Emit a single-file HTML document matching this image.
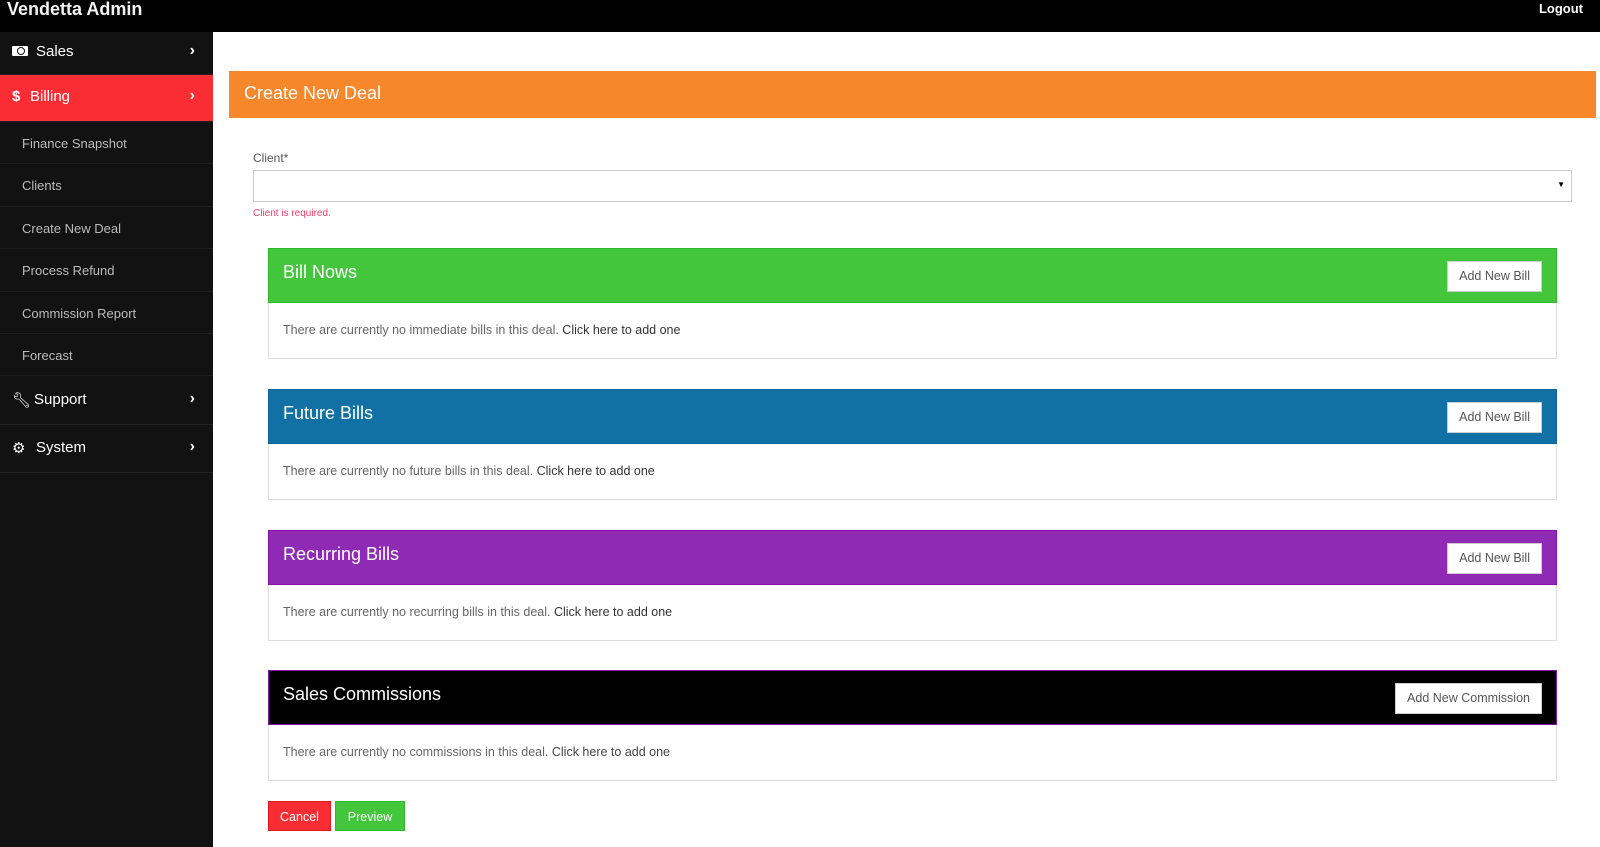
<!DOCTYPE html>
<html><head><style>
*{box-sizing:border-box;margin:0;padding:0}
body{width:1600px;height:847px;overflow:hidden;background:#fff;font-family:"Liberation Sans",sans-serif;position:relative}
.top{position:absolute;left:0;top:0;width:1600px;height:32px;background:#000;color:#fff}
.brand{position:absolute;left:7px;top:-1px;font-size:18px;font-weight:bold;color:#f2f2f2}
.logout{position:absolute;right:17px;top:1px;font-size:13px;font-weight:bold}
.side{position:absolute;left:0;top:32px;width:213px;height:815px;background:#121212}
.nav{position:absolute;left:0;width:213px;color:#fff;font-size:15px;border-bottom:1px solid #222}
.nav span{position:absolute;left:36px}
.nav .ic{position:absolute;left:12px}
.nav .ch{position:absolute;right:18px;left:auto;font-size:16px;font-weight:bold}
.bill{position:absolute;left:12px;top:14px;width:16px;height:10px;background:#fff;border-radius:1px}
.bill:after{content:"";position:absolute;left:5px;top:1px;width:6px;height:6px;border-radius:50%;border:1px solid #121212}
.sub{position:absolute;left:0;width:213px;height:42px;color:#bbb;font-size:13px;padding-left:22px;border-bottom:1px solid #1e1e1e}
.orange{position:absolute;left:229px;top:71px;width:1367px;height:47px;background:#f7872b;color:#fff;font-size:18px;padding:12px 0 0 15px}
.lbl{position:absolute;left:253px;top:151px;font-size:12px;color:#555}
.sel{position:absolute;left:253px;top:170px;width:1319px;height:32px;border:1px solid #ccc}
.sel:after{content:"▼";position:absolute;right:6px;top:9px;font-size:8px;color:#000}
.err{position:absolute;left:253px;top:208px;font-size:10px;color:#f0406a}
.panel{position:absolute;left:268px;width:1289px;height:111px;border:1px solid #ddd}
.ph{height:55px;color:#fff;font-size:18px;padding:13px 0 0 14px;position:relative;margin:-1px -1px 0 -1px}
.pb{padding:20px 0 0 14px;font-size:12.5px;color:#666}
.btn{position:absolute;right:14px;top:12px;height:31px;background:#fff;border:1px solid #ccc;color:#555;font-size:12.5px;padding:7px 11px 0}
.bb{position:absolute;top:801px;height:30px;color:#fff;font-size:12.5px;padding:8px 0 0;text-align:center}
</style></head><body>
<div class="top"><div class="brand">Vendetta Admin</div><div class="logout">Logout</div></div>
<div class="side">
<div class="nav" style="top:0;height:43px"><div class="bill"></div><span style="top:11px">Sales</span><span class="ch" style="top:10px">›</span></div>
<div class="nav" style="top:43px;height:47px;background:#fb2d34"><span class="ic" style="top:13px;font-weight:bold">$</span><span style="top:13px;left:30px">Billing</span><span class="ch" style="top:12px">›</span></div>
<div class="sub" style="top:90px;padding-top:14px">Finance Snapshot</div>
<div class="sub" style="top:133px;padding-top:13px">Clients</div>
<div class="sub" style="top:175px;padding-top:14px">Create New Deal</div>
<div class="sub" style="top:218px;padding-top:13px">Process Refund</div>
<div class="sub" style="top:260px;padding-top:14px">Commission Report</div>
<div class="sub" style="top:302px;padding-top:14px">Forecast</div>
<div class="nav" style="top:345px;height:48px"><span class="ic" style="top:14px">🔧&#xFE0E;</span><span style="top:14px;left:34px">Support</span><span class="ch" style="top:13px">›</span></div>
<div class="nav" style="top:393px;height:48px"><span class="ic" style="top:14px">⚙</span><span style="top:14px">System</span><span class="ch" style="top:13px">›</span></div>
</div>
<div class="orange">Create New Deal</div>
<div class="lbl">Client*</div>
<div class="sel"></div>
<div class="err">Client is required.</div>
<div class="panel" style="top:248px"><div class="ph" style="background:#43c63c;border:1px solid #2fb82a">Bill Nows<div class="btn">Add New Bill</div></div><div class="pb">There are currently no immediate bills in this deal. <span style="color:#333">Click here to add one</span></div></div>
<div class="panel" style="top:389px"><div class="ph" style="background:#1170a4;border:1px solid #0e6598">Future Bills<div class="btn">Add New Bill</div></div><div class="pb">There are currently no future bills in this deal. <span style="color:#333">Click here to add one</span></div></div>
<div class="panel" style="top:530px"><div class="ph" style="background:#8e2ab4;border:1px solid #8a10b0">Recurring Bills<div class="btn">Add New Bill</div></div><div class="pb">There are currently no recurring bills in this deal. <span style="color:#333">Click here to add one</span></div></div>
<div class="panel" style="top:670px"><div class="ph" style="background:#000;border:1px solid #8a10b0">Sales Commissions<div class="btn">Add New Commission</div></div><div class="pb">There are currently no commissions in this deal. <span style="color:#444">Click here to add one</span></div></div>
<div class="bb" style="left:268px;width:63px;background:#fb2d34;border:1px solid #e0181f">Cancel</div>
<div class="bb" style="left:335px;width:70px;background:#43c63c;border:1px solid #2fb82a">Preview</div>
</body></html>
